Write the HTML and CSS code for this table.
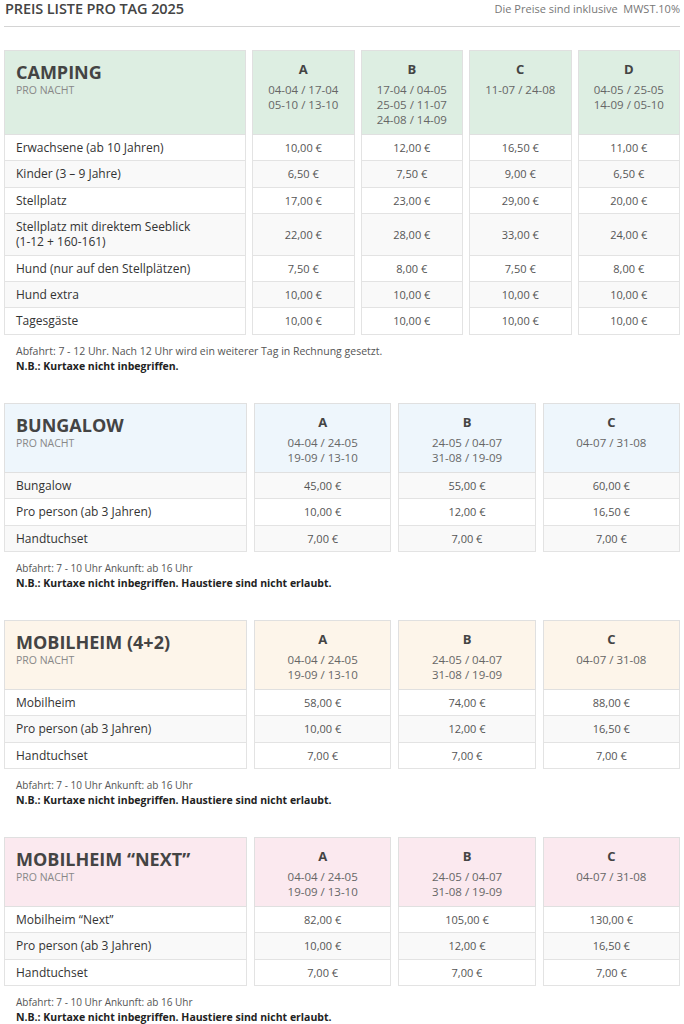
FILE: index.html
```html
<!DOCTYPE html>
<html lang="de">
<head>
<meta charset="utf-8">
<title>Preis Liste pro Tag 2025</title>
<link rel="stylesheet" href="styles.css">
</head>
<body>
<div class="page">
  <header class="top">
    <h1 class="title">PREIS LISTE PRO TAG 2025</h1>
    <span class="vat">Die Preise sind inklusive&nbsp; MWST.10%</span>
  </header>

  <section class="price">
    <div class="grid cols-4 green">
      <div class="hcell name"><h2>CAMPING</h2><span class="sub">PRO NACHT</span></div>
      <div class="hcell season"><b>A</b><span class="dates">04-04 / 17-04<br>05-10 / 13-10</span></div>
      <div class="hcell season"><b>B</b><span class="dates">17-04 / 04-05<br>25-05 / 11-07<br>24-08 / 14-09</span></div>
      <div class="hcell season"><b>C</b><span class="dates">11-07 / 24-08</span></div>
      <div class="hcell season"><b>D</b><span class="dates">04-05 / 25-05<br>14-09 / 05-10</span></div>

      <div class="cell label">Erwachsene (ab 10 Jahren)</div><div class="cell">10,00 €</div><div class="cell">12,00 €</div><div class="cell">16,50 €</div><div class="cell">11,00 €</div>
      <div class="cell label alt">Kinder (3 – 9 Jahre)</div><div class="cell alt">6,50 €</div><div class="cell alt">7,50 €</div><div class="cell alt">9,00 €</div><div class="cell alt">6,50 €</div>
      <div class="cell label">Stellplatz</div><div class="cell">17,00 €</div><div class="cell">23,00 €</div><div class="cell">29,00 €</div><div class="cell">20,00 €</div>
      <div class="cell label alt">Stellplatz mit direktem Seeblick<br>(1-12 + 160-161)</div><div class="cell alt">22,00 €</div><div class="cell alt">28,00 €</div><div class="cell alt">33,00 €</div><div class="cell alt">24,00 €</div>
      <div class="cell label">Hund (nur auf den Stellplätzen)</div><div class="cell">7,50 €</div><div class="cell">8,00 €</div><div class="cell">7,50 €</div><div class="cell">8,00 €</div>
      <div class="cell label alt">Hund extra</div><div class="cell alt">10,00 €</div><div class="cell alt">10,00 €</div><div class="cell alt">10,00 €</div><div class="cell alt">10,00 €</div>
      <div class="cell label">Tagesgäste</div><div class="cell">10,00 €</div><div class="cell">10,00 €</div><div class="cell">10,00 €</div><div class="cell">10,00 €</div>
    </div>
    <p class="note"><span class="line">Abfahrt: 7 - 12 Uhr. Nach 12 Uhr wird ein weiterer Tag in Rechnung gesetzt.</span><strong>N.B.: Kurtaxe nicht inbegriffen.</strong></p>
  </section>

  <section class="price">
    <div class="grid cols-3 blue">
      <div class="hcell name"><h2>BUNGALOW</h2><span class="sub">PRO NACHT</span></div>
      <div class="hcell season"><b>A</b><span class="dates">04-04 / 24-05<br>19-09 / 13-10</span></div>
      <div class="hcell season"><b>B</b><span class="dates">24-05 / 04-07<br>31-08 / 19-09</span></div>
      <div class="hcell season"><b>C</b><span class="dates">04-07 / 31-08</span></div>

      <div class="cell label alt">Bungalow</div><div class="cell alt">45,00 €</div><div class="cell alt">55,00 €</div><div class="cell alt">60,00 €</div>
      <div class="cell label">Pro person (ab 3 Jahren)</div><div class="cell">10,00 €</div><div class="cell">12,00 €</div><div class="cell">16,50 €</div>
      <div class="cell label alt">Handtuchset</div><div class="cell alt">7,00 €</div><div class="cell alt">7,00 €</div><div class="cell alt">7,00 €</div>
    </div>
    <p class="note small"><span class="line">Abfahrt: 7 - 10 Uhr Ankunft: ab 16 Uhr</span><strong>N.B.: Kurtaxe nicht inbegriffen. Haustiere sind nicht erlaubt.</strong></p>
  </section>

  <section class="price">
    <div class="grid cols-3 cream">
      <div class="hcell name"><h2>MOBILHEIM (4+2)</h2><span class="sub">PRO NACHT</span></div>
      <div class="hcell season"><b>A</b><span class="dates">04-04 / 24-05<br>19-09 / 13-10</span></div>
      <div class="hcell season"><b>B</b><span class="dates">24-05 / 04-07<br>31-08 / 19-09</span></div>
      <div class="hcell season"><b>C</b><span class="dates">04-07 / 31-08</span></div>

      <div class="cell label">Mobilheim</div><div class="cell">58,00 €</div><div class="cell">74,00 €</div><div class="cell">88,00 €</div>
      <div class="cell label alt">Pro person (ab 3 Jahren)</div><div class="cell alt">10,00 €</div><div class="cell alt">12,00 €</div><div class="cell alt">16,50 €</div>
      <div class="cell label">Handtuchset</div><div class="cell">7,00 €</div><div class="cell">7,00 €</div><div class="cell">7,00 €</div>
    </div>
    <p class="note small"><span class="line">Abfahrt: 7 - 10 Uhr Ankunft: ab 16 Uhr</span><strong>N.B.: Kurtaxe nicht inbegriffen. Haustiere sind nicht erlaubt.</strong></p>
  </section>

  <section class="price">
    <div class="grid cols-3 pink">
      <div class="hcell name"><h2>MOBILHEIM “NEXT”</h2><span class="sub">PRO NACHT</span></div>
      <div class="hcell season"><b>A</b><span class="dates">04-04 / 24-05<br>19-09 / 13-10</span></div>
      <div class="hcell season"><b>B</b><span class="dates">24-05 / 04-07<br>31-08 / 19-09</span></div>
      <div class="hcell season"><b>C</b><span class="dates">04-07 / 31-08</span></div>

      <div class="cell label">Mobilheim “Next”</div><div class="cell">82,00 €</div><div class="cell">105,00 €</div><div class="cell">130,00 €</div>
      <div class="cell label alt">Pro person (ab 3 Jahren)</div><div class="cell alt">10,00 €</div><div class="cell alt">12,00 €</div><div class="cell alt">16,50 €</div>
      <div class="cell label">Handtuchset</div><div class="cell">7,00 €</div><div class="cell">7,00 €</div><div class="cell">7,00 €</div>
    </div>
    <p class="note small"><span class="line">Abfahrt: 7 - 10 Uhr Ankunft: ab 16 Uhr</span><strong>N.B.: Kurtaxe nicht inbegriffen. Haustiere sind nicht erlaubt.</strong></p>
  </section>
</div>
</body>
</html>
```

FILE: styles.css
```css
* { box-sizing: border-box; }
html, body { margin: 0; padding: 0; background: #fff; }
body {
  font-family: "Open Sans", "Noto Sans", "Liberation Sans", sans-serif;
  color: #333;
}
.page { padding: 0 4px; }

.top {
  display: flex;
  justify-content: space-between;
  align-items: flex-start;
  height: 27px;
  border-bottom: 1px solid #d4d4d4;
  margin-bottom: 23px;
}
.title {
  margin: 0 0 0 1px;
  font-size: 14.5px;
  line-height: 17px;
  font-weight: 600;
  color: #444;
  letter-spacing: -0.1px;
}
.vat {
  font-size: 11px;
  line-height: 18px;
  color: #777;
}

.price { margin-bottom: 29px; }

.grid {
  display: grid;
  column-gap: 6px;
}
.cols-4 { grid-template-columns: 242px repeat(4, 1fr); }
.cols-3 { grid-template-columns: 243px repeat(3, 1fr); column-gap: 7px; }

.hcell {
  border: 1px solid #e0e0e0;
}
.green .hcell { background: #ddeee2; }
.blue .hcell { background: #eef6fc; }
.cream .hcell { background: #fdf5ea; }
.pink .hcell { background: #fbe9ef; }

.name { padding: 10px 11px 7px; }
.name h2 {
  margin: 0;
  font-size: 18px;
  line-height: 22px;
  font-weight: 700;
  color: #444;
}
.sub {
  display: block;
  font-size: 10.5px;
  line-height: 14px;
  color: #888;
}

.season {
  padding: 9px 6px 7px;
  text-align: center;
}
.season b {
  display: block;
  font-size: 13px;
  line-height: 18px;
  font-weight: 700;
  color: #444;
}
.dates {
  display: block;
  margin-top: 4px;
  font-size: 11.5px;
  line-height: 15px;
  color: #666;
}

.cell {
  border: 1px solid #e3e3e3;
  border-top: none;
  padding: 5px 6px 5.4px;
  font-size: 11px;
  line-height: 15px;
  color: #555;
  text-align: center;
  background: #fff;
  display: flex;
  align-items: center;
  justify-content: center;
}
.cell.alt { background: #f9f9f9; }
.cell.label {
  justify-content: flex-start;
  text-align: left;
  padding-left: 11px;
  font-size: 12px;
  color: #333;
}

.note {
  margin: 9px 0 0;
  padding-left: 12px;
  font-size: 10.5px;
  line-height: 15px;
  color: #555;
}
.note .line { display: block; }
.note.small .line { font-size: 10px; }
.note strong { display: block; color: #222; font-weight: 700; font-size: 10.5px; }
```
